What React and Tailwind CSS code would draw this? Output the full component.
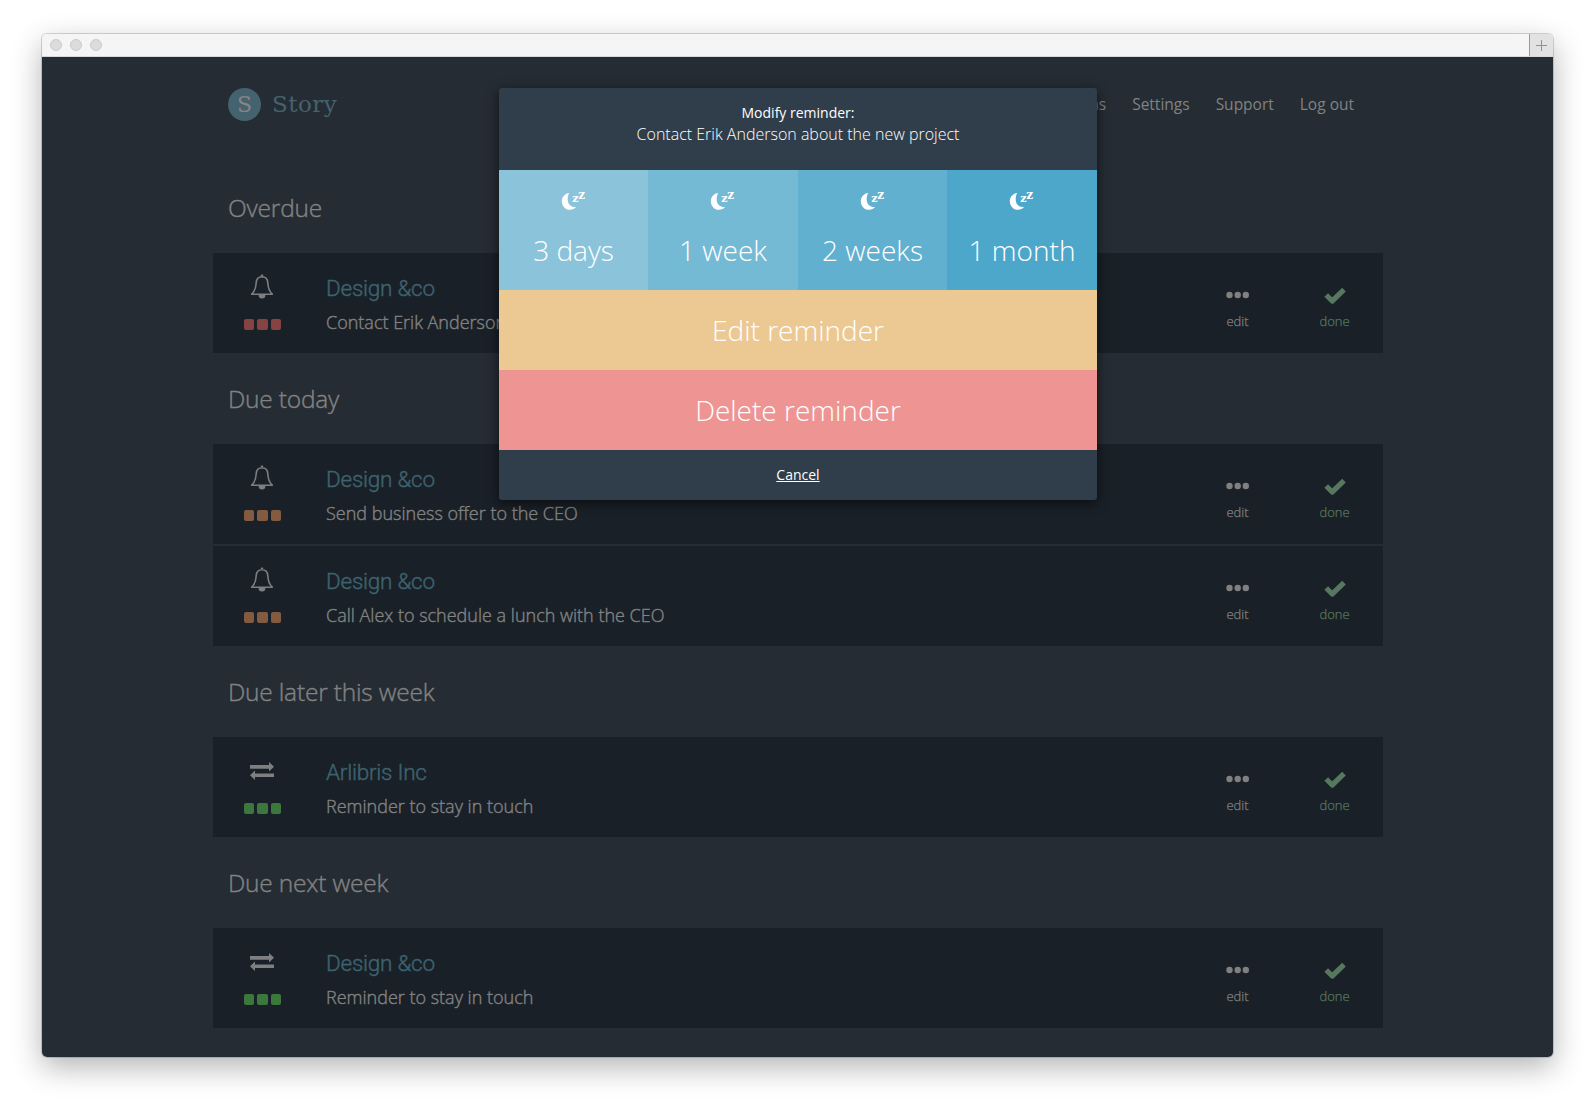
import React from "react";

const sections = [
  { title: "Overdue", items: [{ icon: "bell", name: "Design &co", text: "Contact Erik Anderson about the new project", color: "bg-[#854442]" }] },
  {
    title: "Due today",
    items: [
      { icon: "bell", name: "Design &co", text: "Send business offer to the CEO", color: "bg-[#835b40]" },
      { icon: "bell", name: "Design &co", text: "Call Alex to schedule a lunch with the CEO", color: "bg-[#835b40]" },
    ],
  },
  { title: "Due later this week", items: [{ icon: "swap", name: "Arlibris Inc", text: "Reminder to stay in touch", color: "bg-[#3c783b]" }] },
  { title: "Due next week", items: [{ icon: "swap", name: "Design &co", text: "Reminder to stay in touch", color: "bg-[#3c783b]" }] },
];

const snoozes = [
  { label: "3 days", color: "bg-[#8bc4da]" },
  { label: "1 week", color: "bg-[#75bad5]" },
  { label: "2 weeks", color: "bg-[#62b0d0]" },
  { label: "1 month", color: "bg-[#4da7cb]" },
];

function Bell() {
  return (
    <svg width="24" height="26" viewBox="0 0 24 26" fill="none" stroke="#7d7f80" strokeWidth="1.6" strokeLinejoin="round">
      <path d="M12 2.800C8.200 2.800 6.400 5.200 6.200 8.800 6 14 5 17.200 1.700 20.200h20.600C19 17.200 18 14 17.800 8.800 17.600 5.200 15.800 2.800 12 2.800z" />
      <path d="M12 .6v2" strokeWidth="2.400" />
      <path d="M8.600 21a3.400 3.600 0 0 0 6.800 0z" fill="#7d7f80" stroke="none" />
    </svg>
  );
}

function Swap() {
  return (
    <svg width="24" height="18" viewBox="0 0 24 18" fill="#7d7f80">
      <path d="M0 3h19V0l5 4.800-5 4.800V6.800H0z" />
      <path d="M24 11.500H5V8.400l-5 4.800L5 18v-3h19z" />
    </svg>
  );
}

function Moon() {
  return (
    <svg className="overflow-visible" width="26" height="20" viewBox="0 0 26 20" fill="#fff">
      <path d="M8.200 3C4 3.400.8 6.900.8 11.200c0 4.800 3.500 8.600 8.200 8.600 2.600 0 4.700-1 6-2.800-4.900.4-8.300-2.700-8.300-7.800 0-2.600.6-4.600 1.500-6.200z" />
      <text x="11.200" y="11.500" fontSize="11" fontWeight="bold" fontFamily="DejaVu Serif, serif">z</text>
      <text x="17.200" y="9" fontSize="12" fontWeight="bold" fontFamily="DejaVu Serif, serif">z</text>
    </svg>
  );
}

function Reminder({ item }) {
  return (
    <div className="flex h-[100px] bg-[#192027]">
      <div className="flex w-[98px] shrink-0 flex-col items-center pt-[20px]">
        <div className="flex h-[28px] items-center justify-center">{item.icon === "bell" ? <Bell /> : <Swap />}</div>
        <div className="mt-[18px] ml-[1px] flex gap-[3px]">
          <span className={`h-[11px] w-[10.500px] rounded-[2px] ${item.color}`} />
          <span className={`h-[11px] w-[10.500px] rounded-[2px] ${item.color}`} />
          <span className={`h-[11px] w-[10.500px] rounded-[2px] ${item.color}`} />
        </div>
      </div>
      <div className="grow pt-[19px] pl-[15px]">
        <div className="font-[Roboto] text-[22.5px] leading-[32px] font-light tracking-[-0.25px] text-[#3d6370] [-webkit-text-stroke:0.4px]">{item.name}</div>
        <div className="mt-[3px] text-[18px] leading-[30px] font-light [-webkit-text-stroke:0.4px]">{item.text}</div>
      </div>
      <div className="flex w-[97px] flex-col items-center pt-[38px]">
        <svg width="23" height="8" viewBox="0 0 23 8" fill="#808080">
          <circle cx="3.500" cy="4" r="3.200" />
          <circle cx="11.700" cy="4" r="3.200" />
          <circle cx="19.800" cy="4" r="3.200" />
        </svg>
        <span className="mt-[12px] text-[13px] leading-[20px] font-light [-webkit-text-stroke:0.25px]">edit</span>
      </div>
      <div className="flex w-[97px] flex-col items-center pt-[34px] text-[#55785f]">
        <svg width="22" height="18" viewBox="0 0 22 18" fill="none" stroke="currentColor" strokeWidth="5.200" strokeLinejoin="round">
          <path d="M2.200 8l6 6L20 2.700" />
        </svg>
        <span className="mt-[6px] text-[13px] leading-[20px] font-light [-webkit-text-stroke:0.25px]">done</span>
      </div>
    </div>
  );
}

export default function App() {
  return (
    <div className="h-[1107px] bg-white px-[42px] pt-[34px] font-['Open_Sans',sans-serif]">
      <div className="h-[1023px] overflow-hidden rounded-[5px] shadow-[0_0_0_1px_rgba(0,0,0,0.15),0_10px_30px_rgba(0,0,0,0.3)]">
        <div className="flex h-[23px] items-center justify-between border-b border-[#d8d8d8] bg-[#f5f5f5]">
          <div className="flex gap-2 pl-2">
            <span className="size-3 rounded-full border border-[#cacaca] bg-[#dcdcdc]" />
            <span className="size-3 rounded-full border border-[#cacaca] bg-[#dcdcdc]" />
            <span className="size-3 rounded-full border border-[#cacaca] bg-[#dcdcdc]" />
          </div>
          <div className="flex h-full w-[24px] items-center justify-center border-l border-[#999] bg-[#e2e2e2]">
            <svg width="11" height="11" viewBox="0 0 11 11" stroke="#919191"><path d="M5.500 0v11M0 5.500h11" /></svg>
          </div>
        </div>
        <div className="relative h-[1000px] bg-[#252c33] pr-[170px] pl-[171px] text-[#828282]">
          <header className="flex h-[94px] items-center justify-between pr-[29px] pl-[15px]">
            <div className="flex items-center gap-[11px] font-['DejaVu_Serif',serif] text-[#45626f]">
              <span className="flex size-[33px] items-center justify-center rounded-full bg-[#45626f] pt-px text-[22px] text-[#858585]">S</span>
              <span className="text-[23px] tracking-[0.5px]">Story</span>
            </div>
            <nav className="flex gap-[26px] pt-px text-[15.500px]">
              <span>Reminders</span><span>Teams</span><span>Settings</span><span>Support</span><span>Log out</span>
            </nav>
          </header>
          <main className="pt-[11px]">
            {sections.map((s) => (
              <section key={s.title}>
                <h2 className="flex h-[91px] items-center pt-[2px] pl-[15px] text-[24.5px] font-light tracking-[-0.2px] [-webkit-text-stroke:0.4px]">{s.title}</h2>
                <div className="flex flex-col gap-[2px]">
                  {s.items.map((item, i) => <Reminder key={i} item={item} />)}
                </div>
              </section>
            ))}
          </main>
          <div className="absolute top-[31px] left-[457px] w-[598px] overflow-hidden rounded-[3px] bg-[#303d4a] text-center text-white shadow-[0_3px_12px_rgba(0,0,0,0.6)]">
            <div className="h-[82px] pt-[14px]">
              <p className="text-[14px] leading-[21px]">Modify reminder:</p>
              <p className="text-[16px] leading-[23px] font-light">Contact Erik Anderson about the new project</p>
            </div>
            <div className="grid h-[120px] grid-cols-[149px_150px_149px_150px]">
              {snoozes.map((s) => (
                <div key={s.label} className={`flex flex-col items-center pt-[20px] text-[28px] font-light ${s.color}`}>
                  <Moon />
                  <span className="mt-[20px] leading-[40px]">{s.label}</span>
                </div>
              ))}
            </div>
            <div className="h-20 bg-[#ecc993] text-[28px] leading-[80px] font-light">Edit reminder</div>
            <div className="h-20 bg-[#ee9594] text-[28px] leading-[80px] font-light">Delete reminder</div>
            <div className="h-[50px] text-[14px] leading-[50px] underline">Cancel</div>
          </div>
        </div>
      </div>
    </div>
  );
}
